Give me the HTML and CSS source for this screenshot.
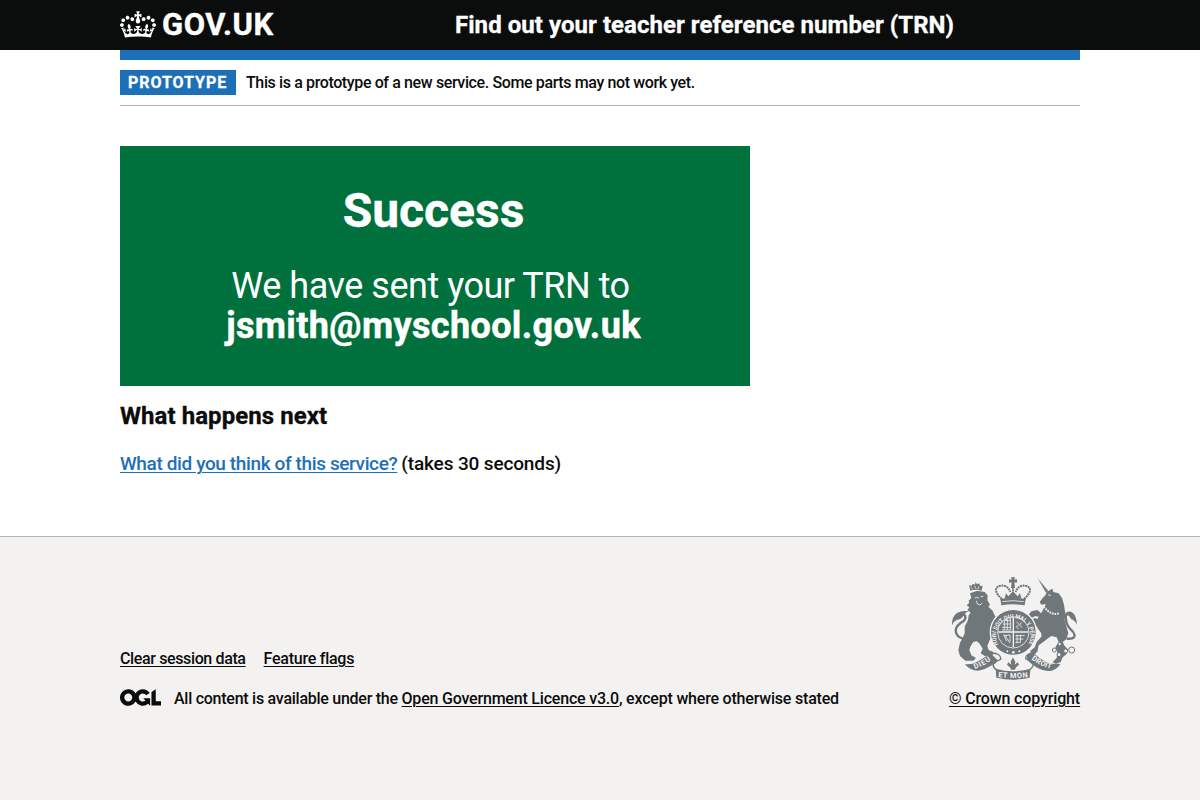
FILE: index.html
```html
<!DOCTYPE html>
<html lang="en">
<head>
<meta charset="utf-8">
<title>Find out your teacher reference number (TRN)</title>
<link rel="stylesheet" href="styles.css">
</head>
<body>
<header class="header">
  <div class="container header-row">
    <a class="logo" href="#">
      <svg class="crown" viewBox="0 0 132 97" width="36" height="32" fill="currentColor" aria-hidden="true"><path fill-rule="evenodd" d="M25 30.2c3.5 1.5 7.7-.2 9.1-3.7 1.5-3.6-.2-7.8-3.9-9.2-3.6-1.4-7.6.3-9.1 3.9-1.4 3.5.3 7.5 3.9 9zM9 39.5c3.6 1.5 7.8-.2 9.2-3.7 1.5-3.6-.2-7.8-3.9-9.1-3.6-1.5-7.6.2-9.1 3.8-1.4 3.5.3 7.5 3.8 9zM4.4 57.2c3.5 1.5 7.7-.2 9.1-3.8 1.5-3.6-.2-7.7-3.9-9.1-3.5-1.5-7.6.3-9.1 3.8-1.4 3.5.3 7.6 3.9 9.1zm38.3-21.4c3.5 1.5 7.7-.2 9.1-3.8 1.5-3.6-.2-7.7-3.9-9.1-3.6-1.5-7.6.3-9.1 3.8-1.3 3.6.4 7.7 3.9 9.1zm64.4-5.6c-3.6 1.5-7.8-.2-9.1-3.7-1.5-3.6.2-7.8 3.8-9.2 3.6-1.4 7.7.3 9.2 3.9 1.3 3.5-.4 7.5-3.9 9zm15.9 9.3c-3.6 1.5-7.7-.2-9.1-3.7-1.5-3.6.2-7.8 3.7-9.1 3.6-1.5 7.7.2 9.2 3.8 1.5 3.5-.3 7.5-3.8 9zm4.7 17.7c-3.6 1.5-7.8-.2-9.2-3.8-1.5-3.6.2-7.7 3.9-9.1 3.6-1.5 7.7.3 9.2 3.8 1.3 3.5-.4 7.6-3.9 9.1zM89.3 35.8c-3.6 1.5-7.8-.2-9.2-3.8-1.4-3.6.2-7.7 3.9-9.1 3.6-1.5 7.7.3 9.2 3.8 1.4 3.6-.3 7.7-3.9 9.1zM69.7 17.7l8.9 4.7V9.3l-8.9 2.8c-.2-.3-.5-.6-.9-.9L72.4 0H59.6l3.5 11.2c-.3.3-.6.5-.9.9l-8.8-2.8v13.1l8.8-4.7c.3.3.6.7.9.9l-5 15.4v.1c-.2.8-.4 1.6-.4 2.4 0 4.1 3.1 7.5 7 8.1h.2c.3 0 .7.1 1 .1.4 0 .7 0 1-.1h.2c4-.6 7.1-4.1 7.1-8.1 0-.8-.1-1.7-.4-2.4V34l-5.1-15.4c.4-.2.7-.6 1-.9zM66 92.8c16.9 0 32.8 1.1 47.1 3.2 4-16.9 8.9-26.7 14-33.5l-9.6-3.4c1 4.9 1.1 7.2 0 10.2-1.5-1.4-3-4.3-4.2-8.7L108.6 76c2.8-2 5-3.2 7.5-3.3-4.4 9.4-10 11.9-13.6 11.2-4.3-.8-6.3-4.6-5.6-7.9 1-4.7 5.7-5.9 8-.5 4.3-8.7-3-11.4-7.6-8.8 7.1-7.2 7.9-13.5 2.1-21.1-8 6.1-8.1 12.3-4.5 20.8-4.7-5.4-12.1-2.5-9.5 6.2 3.4-5.2 7.9-2 7.2 3.1-.6 4.3-6.4 7.8-13.5 7.2-10.3-.9-10.9-8-11.2-13.8 2.5-.5 7.1 1.8 11 7.3L80.2 60c-4.1 4.4-8 5.3-12.3 5.4 1.4-4.4 8-11.6 8-11.6H55.5s6.4 7.2 7.9 11.6c-4.2-.1-8-1-12.3-5.4l1.4 16.4c3.9-5.5 8.5-7.7 10.9-7.3-.3 5.8-.9 12.8-11.1 13.8-7.2.6-12.9-2.9-13.5-7.2-.7-5 3.8-8.3 7.1-3.1 2.7-8.7-4.6-11.6-9.4-6.2 3.7-8.5 3.6-14.7-4.6-20.8-5.8 7.6-5 13.9 2.2 21.1-4.7-2.6-11.9.1-7.7 8.8 2.3-5.5 7.1-4.2 8.1.5.7 3.3-1.3 7.1-5.7 7.9-3.5.7-9-1.8-13.5-11.2 2.5.1 4.7 1.3 7.5 3.3l-4.7-15.4c-1.2 4.4-2.7 7.2-4.3 8.7-1.1-3-.9-5.3 0-10.2l-9.5 3.4c5 6.9 9.9 16.7 14 33.5 14.8-2.1 30.8-3.2 47.7-3.2z"/></svg>
      <span class="logo-text">GOV.UK</span>
    </a>
    <a class="service-name" href="#">Find out your teacher reference number (TRN)</a>
  </div>
</header>
<div class="page">
  <div class="container">
    <div class="phase-banner">
      <strong class="tag">Prototype</strong>
      <span class="phase-text">This is a prototype of a new service. Some parts may not work yet.</span>
    </div>
    <main class="main">
      <div class="panel">
        <h1 class="panel-title">Success</h1>
        <div class="panel-body"><span class="sent">We have sent your TRN to</span><br><strong class="email">jsmith@myschool.gov.uk</strong></div>
      </div>
      <h2 class="heading">What happens next</h2>
      <p class="body"><a class="link" href="#">What did you think of this service?</a><span class="takes">(takes 30 seconds)</span></p>
    </main>
  </div>
</div>
<footer class="footer">
  <div class="container footer-row">
    <div class="footer-main">
      <ul class="footer-links">
        <li><a class="session-link" href="#">Clear session data</a></li>
        <li><a class="flags-link" href="#">Feature flags</a></li>
      </ul>
      <div class="licence">
        <svg class="ogl" viewBox="0 0 483.2 195.7" width="41" height="17" aria-hidden="true"><path fill="currentColor" d="M421.5 142.8V.1l-50.7 32.3v161.1h112.4v-50.7zm-122.3-9.6A47.12 47.12 0 0 1 221 97.8c0-26 21.1-47.1 47.1-47.1 16.7 0 31.4 8.7 39.7 21.8l42.7-27.2A97.63 97.63 0 0 0 268.1 0c-36.5 0-68.3 20.1-85.1 49.7A98 98 0 0 0 97.8 0C43.9 0 0 43.9 0 97.8s43.9 97.8 97.8 97.8c36.5 0 68.3-20.1 85.1-49.7a97.76 97.76 0 0 0 149.6 25.4l19.4 22.2h3v-87.8h-80l24.3 27.5zM97.8 145c-26 0-47.1-21.1-47.1-47.1s21.1-47.1 47.1-47.1 47.1 21.1 47.1 47.1S123.8 145 97.8 145"/></svg>
        <span class="licence-text"><span class="licence-intro">All content is available under the </span><a href="#">Open Government Licence v3.0</a>, except where otherwise stated</span>
      </div>
    </div>
    <a class="copyright" href="#">
      <svg class="crest" viewBox="36 21 375 306" width="125" height="102" aria-hidden="true">
        <defs>
          <path id="garter" d="M175 223A52 52 0 1 1 265 223"/>
          <path id="sdieu" d="M104 297Q133 288 162 264"/>
          <path id="smon" d="M174 321Q219 327 268 321"/>
          <path id="sdroit" d="M274 268Q302 290 340 298"/>
        </defs>
        <g class="ink">
          <!-- lion -->
          <path d="M91 62l-4-17 8 3 3-7 7 3 2-8 4 7 7-3 2 8 8-1-3 15q-17-5-34 0z"/>
          <path d="M90 70L112 62 134 66 143 76 142 90 150 104 145 110 158 122 163 134 172 146 174 160 162 170 154 168 152 180 156 196 148 212 142 228 146 240 160 246 158 256 134 258 122 250 128 236 118 220 110 214 100 216 92 228 88 240 94 256 108 264 100 272 76 272 60 258 55 240 60 218 68 204 74 190 74 170 84 150 86 136 92 128 82 120 88 112 80 106 88 98 86 92 94 84z"/>
          <path class="line tail" d="M76 206Q54 206 48 188Q44 170 63 158Q80 150 75 136Q68 130 58 142"/>
          <path d="M36 166q-2-26 16-38 16-8 34-4-14 6-16 14-6 10-20 12-10 4-14 16z"/>
          <!-- unicorn -->
          <path d="M293 25l32 38-7 5z"/>
          <path d="M320 66L337 56 340 66 356 70 366 84 372 104 376 130 374 150 380 172 385 190 379 208 368 216 374 228 384 238 380 252 368 262 362 276 348 282 338 276 350 264 352 246 346 232 356 216 350 202 334 198 322 206 310 216 296 226 292 246 278 252 270 244 284 232 290 216 304 200 304 190 294 176 286 160 296 140 306 126 312 112 318 102 304 104 299 96 308 84 316 76z"/>
          <path class="line tail" d="M380 206Q404 208 404 196Q402 186 390 176Q378 162 378 148Q374 132 386 132"/>
          <path d="M375 132q5-9 18-7 16 6 18 39-7-14-18-17-5-13-18-15z"/>
          <path d="M266 134l8-10 18-4 12 10-2 12-16-4-12 6zM270 150l14-5 12 2 8 14-10 12-10-10-14-3z"/>
          <!-- crown -->
          <path d="M213 22h12l-2 7 8-1v10l-8-1 2 17h-12l2-17-8 1V28l8 1zM181 87q38-8 76 0l-3 19q-35-6-70 0z"/>
          <path class="beads" d="M186 87Q154 58 178 48Q202 42 211 66M252 87Q284 58 260 48Q236 42 227 66M219 50V84"/>
          <path d="M194 84l4-14 7 9 14-15 14 15 7-9 4 14z"/>
          <!-- scroll -->
          <path d="M74 282q20 3 38-7 20-10 39-26l22 22q-2 10-17 14-20 14-43 17-22 0-39-20zM167 296q52 15 104 0l-2 27q-50 12-100 0zM261 255l16-9q20 20 43 31 20 8 42 4-14 22-38 22-32-2-63-34z"/>
          <path class="line" d="M150 250Q184 248 182 268Q160 276 159 284Q160 294 170 300M288 249Q256 248 257 266Q278 276 280 284Q278 294 268 300"/>
          <path d="M219 262l7 13-2 9 9-7 4 7-10 9-2 6h-12l-2-6-10-9 4-7 9 7-2-9z"/>
          <circle class="disc" cx="220" cy="187" r="69"/>
        </g>
        <g class="paper">
          <circle class="ring" cx="220" cy="187" r="47"/>
          <path class="hair cross" d="M220 142v90M175 186h90"/>
          <path class="hair" d="M188 162h26M186 172h28M226 197h28M226 207h24M226 217h16M192 152h20M186 180h28"/>
          <path class="hair" d="M193 152v27M202 149v30M211 146v33M231 194v26M241 194v24"/>
          <path class="hair" d="M229 155l8 8-8 8 7 6M244 157l-5 8 7 8M195 196l15 23M192 196l8 18M210 195v20M190 195q12 4 20-1"/>
          <path class="hair" d="M104 84l9-2 4 4M122 80l8-1M109 92l3 10 8 3 7-6M324 74l9 3M93 52l6 6M104 48l4 8M116 50l-2 7"/>
          <path class="chain" d="M311 110Q334 138 357 130"/>
          <path class="hair" d="M187 95q32-6 64 0"/>
          <circle cx="202" cy="244" r="3"/><circle cx="220" cy="247" r="4"/><circle cx="238" cy="244" r="3"/>
          <text class="motto"><textPath href="#garter" textLength="216" lengthAdjust="spacingAndGlyphs">HONI SOIT QUI MAL Y PENSE</textPath></text>
          <text class="scroll"><textPath href="#sdieu" textLength="56">DIEU</textPath></text>
          <text class="scroll"><textPath href="#smon" textLength="90">ET MON</textPath></text>
          <text class="scroll"><textPath href="#sdroit" textLength="66">DROIT</textPath></text>
        </g>
        <g class="links"><circle cx="359" cy="222" r="5"/><circle cx="395" cy="240" r="9"/><circle cx="377" cy="243" r="6"/><circle cx="357" cy="254" r="6"/><circle cx="343" cy="240" r="6"/></g>
      </svg>
      <span class="copy-text">© Crown copyright</span>
    </a>
  </div>
</footer>
</body>
</html>
```
FILE: styles.css
```css
* { box-sizing: border-box; }
body { margin: 0; background: #f3f2f1; color: #0b0c0c; font-family: Roboto, "Liberation Sans", sans-serif; font-weight: 500; }
a { color: inherit; text-decoration-thickness: 1px; text-underline-offset: 2px; }
h1, h2, p, ul { margin: 0; padding: 0; }
.container { width: 960px; margin: 0 auto; }
.header { background: #0b0c0c; color: #fff; height: 50px; position: relative; }
.header-row { display: grid; grid-template-columns: 335px 1fr; height: 60px; border-bottom: 10px solid #1d70b8; }
.header a { text-decoration: none; white-space: nowrap; }
.logo { display: flex; align-items: center; height: 50px; gap: 6px; }
.crown { display: block; height: 27px; margin-bottom: 2px; }
.logo-text { font-size: 31px; font-weight: 700; line-height: 50px; letter-spacing: 0.6px; -webkit-text-stroke: 0.4px; }
.service-name { font-size: 24px; font-weight: 700; line-height: 50px; letter-spacing: 0.05px; -webkit-text-stroke: 0.3px; }
.page { background: #fff; padding-top: 10px; }
.phase-banner { display: flex; align-items: center; gap: 10px; height: 46px; padding: 10px 0; border-bottom: 1px solid #b1b4b6; font-size: 16px; white-space: nowrap; }
.phase-text { letter-spacing: -0.38px; }
.tag { width: 116px; height: 25px; background: #1d70b8; color: #fff; text-transform: uppercase; line-height: 25px; padding-left: 8px; font-weight: 700; letter-spacing: 0.95px; -webkit-text-stroke: 0.3px; }
.main { padding: 40px 0 60px; height: 430px; }
.panel { width: 630px; height: 240px; background: #00703c; color: #fff; text-align: center; padding: 40px 3px 0 0; }
.panel-title { font-size: 48px; line-height: 50px; margin-bottom: 30px; -webkit-text-stroke: 0.4px; }
.panel-body { font-size: 36px; line-height: 40px; font-weight: 400; }
.sent { letter-spacing: -0.48px; padding-right: 6px; }
.email { letter-spacing: 0.36px; -webkit-text-stroke: 0.5px; }
.heading { font-size: 24px; line-height: 30px; margin: 15px 0 20px; letter-spacing: 0.06px; -webkit-text-stroke: 0.3px; }
.body { display: flex; gap: 4px; font-size: 19px; line-height: 25px; }
.link { color: #1d70b8; letter-spacing: -0.38px; }
.takes { letter-spacing: -0.14px; }
.footer { border-top: 1px solid #b1b4b6; background: #f3f2f1; font-size: 16px; line-height: 20px; }
.footer-row { display: flex; justify-content: space-between; align-items: flex-end; padding-top: 40px; white-space: nowrap; }
.footer-links { display: flex; gap: 18px; list-style: none; margin-bottom: 20px; }
.session-link { letter-spacing: -0.37px; }
.flags-link { letter-spacing: -0.25px; }
.licence { display: flex; gap: 13px; align-items: center; letter-spacing: -0.2px; }
.licence-intro { letter-spacing: -0.26px; }
.ogl { display: block; margin-bottom: 3px; }
.copyright { width: 131px; display: flex; flex-direction: column; align-items: center; gap: 10px; }
.copy-text { letter-spacing: -0.14px; text-decoration: underline 1px; }
.crest { display: block; overflow: visible; }
.ink { fill: #6f777b; }
.line, .beads, .chain { fill: none; }
.line { stroke: #6f777b; stroke-width: 4; }
.tail { stroke-width: 7; }
.beads { stroke: #6f777b; stroke-width: 6; stroke-dasharray: 6 2; }
.disc { stroke: #f3f2f1; stroke-width: 4; }
.paper { fill: #f3f2f1; }
.ring, .hair { fill: none; stroke: #f3f2f1; stroke-width: 2.5; }
.paper .cross { stroke-width: 4; }
.chain { stroke: #f3f2f1; stroke-width: 6; stroke-dasharray: 5 3; }
.motto, .scroll { fill: #f3f2f1; font-weight: 700; font-size: 18px; }
.scroll { font-size: 22px; }
.links { fill: #f3f2f1; stroke: #6f777b; stroke-width: 3; }
```
